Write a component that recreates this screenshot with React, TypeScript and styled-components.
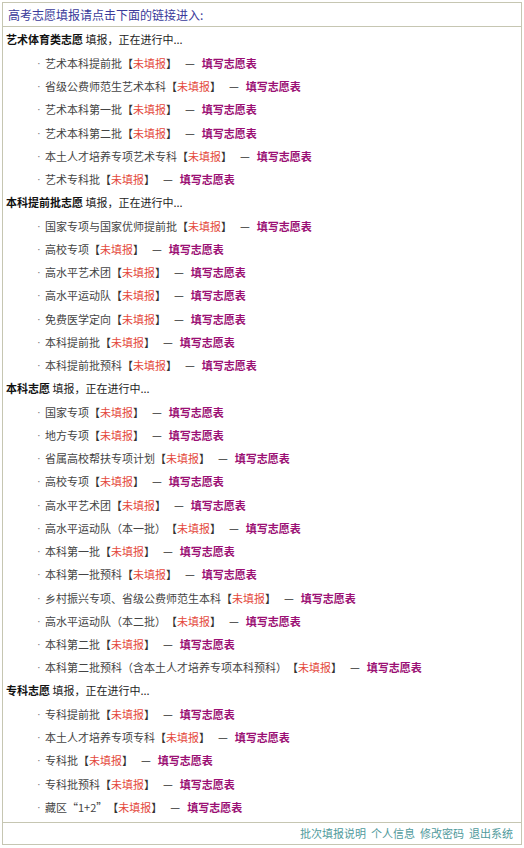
import styled, { createGlobalStyle } from 'styled-components';

const GlobalStyle = createGlobalStyle`
  html, body {
    margin: 0;
    padding: 0;
    background: #ffffff;
  }
  body {
    font-family: 'Noto Sans CJK SC', 'Liberation Sans', sans-serif;
    color: #333333;
  }
`;

const Panel = styled.div`
  margin: 2px 2px 0 2px;
  width: 518px;
  border: 1px solid #c6c6b2;
  background: #fff;
`;

const Header = styled.div`
  height: 23px;
  line-height: 23px;
  padding-left: 5px;
  border-bottom: 1px solid #c6c6b2;
  font-size: 12px;
  color: #3a3a9a;
`;

const Body = styled.div`
  padding: 1px 0 3px 0;
`;

const SectionTitle = styled.div`
  height: 23.25px;
  line-height: 23.25px;
  padding-left: 3px;
  font-size: 11px;
  color: #222;

  b {
    font-weight: 700;
    color: #111;
  }
`;

const Item = styled.div`
  display: flex;
  align-items: center;
  height: 23.25px;
  padding-left: 34px;
  font-size: 11px;
  color: #444;
  white-space: nowrap;
`;

const Dot = styled.span`
  width: 8px;
  font-family: 'Liberation Sans', sans-serif;
  color: #777;
`;

const Bracket = styled.span`
  color: #333;
`;

const Pending = styled.span`
  color: #e4493c;
`;

const Dash = styled.span`
  margin: 0 7px 0 8px;
  color: #333;
`;

const FillLink = styled.a`
  font-weight: 700;
  font-size: 11px;
  color: #9b0f74;
  text-decoration: none;
`;

const Footer = styled.div`
  height: 21px;
  line-height: 21px;
  border-top: 1px solid #c6c6b2;
  display: flex;
  justify-content: flex-end;
  gap: 5px;
  padding-right: 8px;
  font-size: 11px;
`;

const FooterLink = styled.a`
  color: #4f9a9c;
  text-decoration: none;
`;

type Section = { title: string; items: string[] };

const sections: Section[] = [
  {
    title: '艺术体育类志愿',
    items: [
      '艺术本科提前批',
      '省级公费师范生艺术本科',
      '艺术本科第一批',
      '艺术本科第二批',
      '本土人才培养专项艺术专科',
      '艺术专科批',
    ],
  },
  {
    title: '本科提前批志愿',
    items: [
      '国家专项与国家优师提前批',
      '高校专项',
      '高水平艺术团',
      '高水平运动队',
      '免费医学定向',
      '本科提前批',
      '本科提前批预科',
    ],
  },
  {
    title: '本科志愿',
    items: [
      '国家专项',
      '地方专项',
      '省属高校帮扶专项计划',
      '高校专项',
      '高水平艺术团',
      '高水平运动队（本一批）',
      '本科第一批',
      '本科第一批预科',
      '乡村振兴专项、省级公费师范生本科',
      '高水平运动队（本二批）',
      '本科第二批',
      '本科第二批预科（含本土人才培养专项本科预科）',
    ],
  },
  {
    title: '专科志愿',
    items: ['专科提前批', '本土人才培养专项专科', '专科批', '专科批预科', '藏区“1+2”'],
  },
];

const App = () => {
  return (
    <>
      <GlobalStyle />
      <Panel>
        <Header>高考志愿填报请点击下面的链接进入:</Header>
        <Body>
          {sections.map((s) => (
            <div key={s.title}>
              <SectionTitle>
                <b>{s.title}</b> 填报，正在进行中...
              </SectionTitle>
              {s.items.map((name, i) => (
                <Item key={i}>
                  <Dot>·</Dot>
                  <span>{name}</span>
                  <Bracket>【</Bracket>
                  <Pending>未填报</Pending>
                  <Bracket>】</Bracket>
                  <Dash>—</Dash>
                  <FillLink href="#">填写志愿表</FillLink>
                </Item>
              ))}
            </div>
          ))}
        </Body>
        <Footer>
          <FooterLink href="#">批次填报说明</FooterLink>
          <FooterLink href="#">个人信息</FooterLink>
          <FooterLink href="#">修改密码</FooterLink>
          <FooterLink href="#">退出系统</FooterLink>
        </Footer>
      </Panel>
    </>
  );
};

export default App;
